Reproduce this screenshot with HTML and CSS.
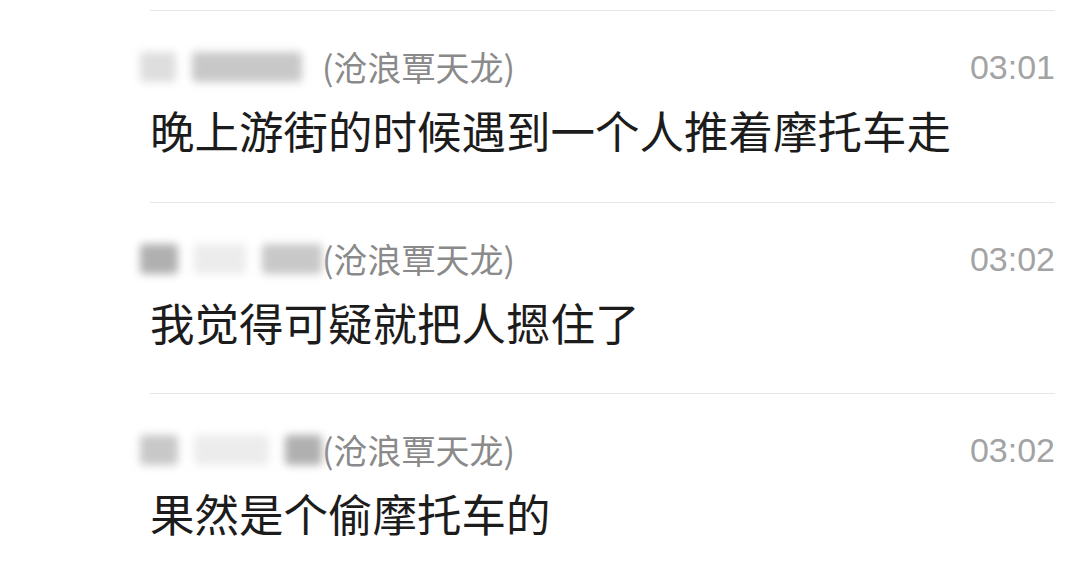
FILE: index.html
```html
<!DOCTYPE html>
<html lang="zh-CN">
<head>
  <meta charset="UTF-8">
  <meta name="viewport" content="width=device-width, initial-scale=1.0">
  <title>群聊记录</title>
  <link rel="stylesheet" href="styles.css">
</head>
<body>
  <div class="chat-list">
    <div class="item">
      <div class="meta">
        <div class="sender">
          <span class="blur-name">
            <span class="blob b-light w36"></span>
            <span class="blob b-mid w110"></span>
          </span>
          <span class="group-name">(沧浪覃天龙)</span>
        </div>
        <span class="time">03:01</span>
      </div>
      <div class="text">晚上游街的时候遇到一个人推着摩托车走</div>
    </div>

    <div class="item">
      <div class="meta">
        <div class="sender">
          <span class="blur-name">
            <span class="blob b-dark w44"></span>
            <span class="blob b-faint w60"></span>
            <span class="blob b-mid w70"></span>
          </span>
          <span class="group-name">(沧浪覃天龙)</span>
        </div>
        <span class="time">03:02</span>
      </div>
      <div class="text">我觉得可疑就把人摁住了</div>
    </div>

    <div class="item">
      <div class="meta">
        <div class="sender">
          <span class="blur-name">
            <span class="blob b-mid w40"></span>
            <span class="blob b-faint w80"></span>
            <span class="blob b-dark w40"></span>
          </span>
          <span class="group-name">(沧浪覃天龙)</span>
        </div>
        <span class="time">03:02</span>
      </div>
      <div class="text">果然是个偷摩托车的</div>
    </div>
  </div>
</body>
</html>
```

FILE: styles.css
```css
body {
  margin: 0;
  background: #ffffff;
  font-family: "Noto Sans CJK SC", "Noto Sans", sans-serif;
}

.chat-list {
  padding: 10px 25px 0 150px;
}

.item {
  border-top: 1px solid #e6e6e6;
  padding: 36px 0 46.5px;
}

.meta {
  display: flex;
  align-items: center;
  justify-content: space-between;
  height: 40px;
}

.sender {
  display: flex;
  align-items: center;
}

.blur-name {
  display: flex;
  align-items: center;
  gap: 16px;
  margin-left: -10px;
  width: 182px;
  height: 40px;
}

.blob {
  display: block;
  height: 30px;
  border-radius: 4px;
  filter: blur(4px);
}

.b-faint { background: #ececec; }
.b-light { background: #dedede; }
.b-mid { background: #c8c8c8; }
.b-dark { background: #b0b0b0; }

.w36 { width: 36px; }
.w40 { width: 40px; }
.w44 { width: 44px; }
.w60 { width: 60px; }
.w70 { width: 70px; }
.w80 { width: 80px; }
.w110 { width: 110px; }

.group-name {
  font-size: 34px;
  color: #8a8a8a;
  line-height: 40px;
}

.time {
  font-family: "Liberation Sans", Arial, sans-serif;
  font-size: 34px;
  color: #a3a3a3;
  line-height: 40px;
}

.text {
  margin-top: 18px;
  font-size: 44.5px;
  line-height: 50px;
  color: #1c1c1c;
}
```
